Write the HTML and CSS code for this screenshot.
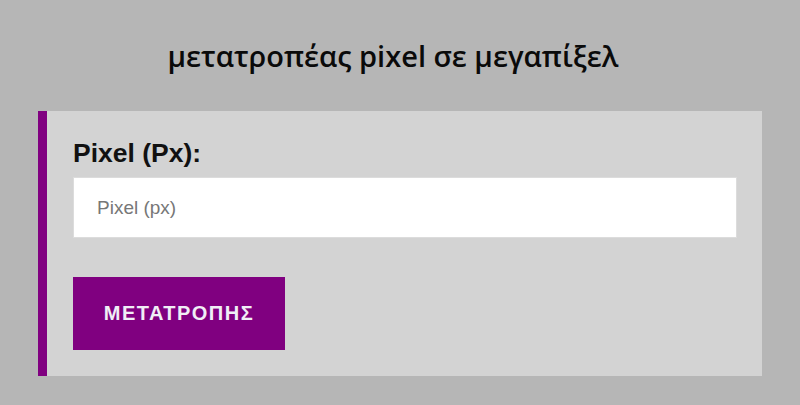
FILE: index.html
```html
<!DOCTYPE html>
<html lang="el">
<head>
<meta charset="utf-8">
<link rel="stylesheet" href="styles.css">
</head>
<body>
<div class="page">
  <h1 class="title">μετατροπέας pixel σε μεγαπίξελ</h1>
  <div class="card">
    <label class="label" for="px">Pixel (Px):</label>
    <input class="input" id="px" type="text" placeholder="Pixel (px)">
    <button class="btn" type="button">ΜΕΤΑΤΡΟΠΗΣ</button>
  </div>
</div>
</body>
</html>
```
FILE: styles.css
```css
html, body {
  margin: 0;
  padding: 0;
  background: #b6b6b6;
}
.page {
  width: 800px;
  height: 405px;
  padding: 0 38px 0 38px;
  box-sizing: border-box;
  display: flex;
  flex-direction: column;
}
.title {
  flex: none;
  margin: 0;
  padding: 38px 14px 0 0;
  height: 111px;
  box-sizing: border-box;
  text-align: center;
  font-family: "Open Sans", sans-serif;
  font-weight: 600;
  font-size: 29px;
  line-height: 36px;
  color: #0a0a0a;
}
.card {
  flex: none;
  width: 724px;
  height: 265px;
  box-sizing: border-box;
  background: #d3d3d3;
  border-left: 9px solid #800080;
  padding: 26px 25px 0 26px;
  display: flex;
  flex-direction: column;
  align-items: flex-start;
}
.label {
  font-family: "Liberation Sans", Arial, sans-serif;
  font-weight: bold;
  font-size: 26.5px;
  line-height: 32px;
  color: #111;
  margin-bottom: 8px;
}
.input {
  width: 664px;
  height: 61px;
  box-sizing: border-box;
  border: 1px solid #dcdcdc;
  background: #fff;
  padding: 0 0 0 23px;
  font-family: "Liberation Sans", Arial, sans-serif;
  font-size: 19px;
  color: #333;
  outline: none;
  margin: 0 0 39px 0;
}
.input::placeholder {
  color: #777;
}
.btn {
  width: 212px;
  height: 73px;
  border: none;
  background: #800080;
  color: #f0eef6;
  font-family: "Liberation Sans", Arial, sans-serif;
  font-weight: bold;
  font-size: 20px;
  letter-spacing: 1.5px;
  padding: 0;
  cursor: pointer;
}
```
